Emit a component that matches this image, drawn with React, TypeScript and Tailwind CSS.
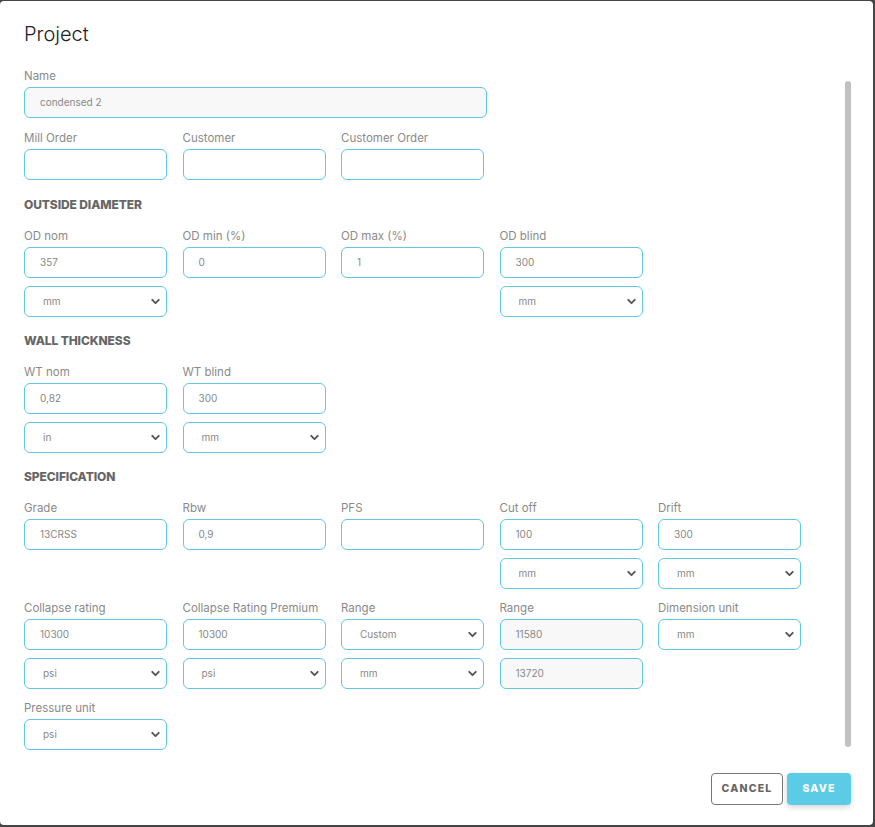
import { ChevronDown } from "lucide-react";
import type { ReactNode } from "react";

const font = { fontFamily: "Inter, 'Noto Sans', sans-serif" };

function Label({ children }: { children: ReactNode }) {
  return (
    <div className="mb-[4px] h-[14px] text-[11.5px] leading-[14px] text-[#8a8a8a] whitespace-nowrap">
      {children}
    </div>
  );
}

function Input({ value = "", disabled = false }: { value?: string; disabled?: boolean }) {
  return (
    <div
      className={
        "flex h-[31px] items-center rounded-[6px] border border-[#5fc9e2] pl-[15px] text-[10px] text-[#888] " +
        (disabled ? "bg-[#f8f8f8]" : "bg-white")
      }
    >
      {value}
    </div>
  );
}

function Select({ value }: { value: string }) {
  return (
    <div className="flex h-[31px] items-center justify-between rounded-[6px] border border-[#5fc9e2] bg-white pl-[18px] pr-[4px] text-[10px] text-[#888]">
      <span>{value}</span>
      <ChevronDown size={13} strokeWidth={3.5} className="text-[#555]" />
    </div>
  );
}

type Cell = {
  label?: string;
  value?: string;
  disabled?: boolean;
  topSelect?: boolean;
  second?: { value: string; disabled?: boolean; select?: boolean };
};

function Row({ cells }: { cells: Cell[] }) {
  return (
    <div className="grid grid-cols-[repeat(5,143px)] gap-x-[15.5px]">
      {cells.map((c, i) => (
        <div key={i} className="flex flex-col gap-[8px]">
          {c.label !== undefined ? (
            <div>
              <Label>{c.label}</Label>
              {c.topSelect ? <Select value={c.value ?? ""} /> : <Input value={c.value} disabled={c.disabled} />}
            </div>
          ) : null}
          {c.second ? (
            c.second.select ? (
              <Select value={c.second.value} />
            ) : (
              <Input value={c.second.value} disabled={c.second.disabled} />
            )
          ) : null}
        </div>
      ))}
    </div>
  );
}

function Heading({ children, first = false }: { children: string; first?: boolean }) {
  return (
    <div
      className={
        "pb-[16px] text-[12px] leading-[16px] font-extrabold tracking-[-0.1px] text-[#666] uppercase " +
        (first ? "pt-[17px]" : "pt-[16px]")
      }
    >
      {children}
    </div>
  );
}

export default function App() {
  return (
    <div className="h-[827px] w-[875px] bg-[#454545] pt-[1px] pr-[2px] pb-[2px]" style={font}>
      <div className="flex h-full flex-col rounded-[4px] bg-white">
        <div className="px-6 pt-[19px] text-[20px] leading-[28px] font-light text-[#222]">Project</div>

        <div className="flex h-[713px] pr-[22px]">
          <div className="flex-1 pl-6 pt-[21px]">
            <div className="w-[463px]">
              <Label>Name</Label>
              <Input value="condensed 2" disabled />
            </div>
            <div className="mt-[13px]">
              <Row
                cells={[
                  { label: "Mill Order" },
                  { label: "Customer" },
                  { label: "Customer Order" },
                ]}
              />
            </div>

            <Heading first>Outside Diameter</Heading>
            <Row
              cells={[
                { label: "OD nom", value: "357", second: { value: "mm", select: true } },
                { label: "OD min (%)", value: "0" },
                { label: "OD max (%)", value: "1" },
                { label: "OD blind", value: "300", second: { value: "mm", select: true } },
              ]}
            />

            <Heading>Wall Thickness</Heading>
            <Row
              cells={[
                { label: "WT nom", value: "0,82", second: { value: "in", select: true } },
                { label: "WT blind", value: "300", second: { value: "mm", select: true } },
              ]}
            />

            <Heading>Specification</Heading>
            <Row
              cells={[
                { label: "Grade", value: "13CRSS" },
                { label: "Rbw", value: "0,9" },
                { label: "PFS" },
                { label: "Cut off", value: "100", second: { value: "mm", select: true } },
                { label: "Drift", value: "300", second: { value: "mm", select: true } },
              ]}
            />
            <div className="mt-[12px]">
              <Row
                cells={[
                  { label: "Collapse rating", value: "10300", second: { value: "psi", select: true } },
                  { label: "Collapse Rating Premium", value: "10300", second: { value: "psi", select: true } },
                  { label: "Range", value: "Custom", topSelect: true, second: { value: "mm", select: true } },
                  { label: "Range", value: "11580", disabled: true, second: { value: "13720", disabled: true } },
                  { label: "Dimension unit", value: "mm", topSelect: true },
                ]}
              />
            </div>
            <div className="mt-[12px]">
              <Row cells={[{ label: "Pressure unit", value: "psi", topSelect: true }]} />
            </div>
          </div>
          <div className="w-[6px] pt-[33px]">
            <div className="h-[666px] rounded-[3px] bg-[#c1c1c1]" />
          </div>
        </div>

        <div className="flex justify-end gap-[4px] pr-[22px] pt-[12px]">
          <button className="h-[32px] w-[72px] rounded-[4px] border border-[#777] bg-white text-[10.5px] font-extrabold tracking-[1.2px] text-[#666]">
            CANCEL
          </button>
          <button className="h-[32px] w-[64px] rounded-[4px] bg-[#5ccbe6] text-[10.5px] font-extrabold tracking-[1.2px] text-white shadow-[0_2px_6px_rgba(0,0,0,0.18)]">
            SAVE
          </button>
        </div>
      </div>
    </div>
  );
}
